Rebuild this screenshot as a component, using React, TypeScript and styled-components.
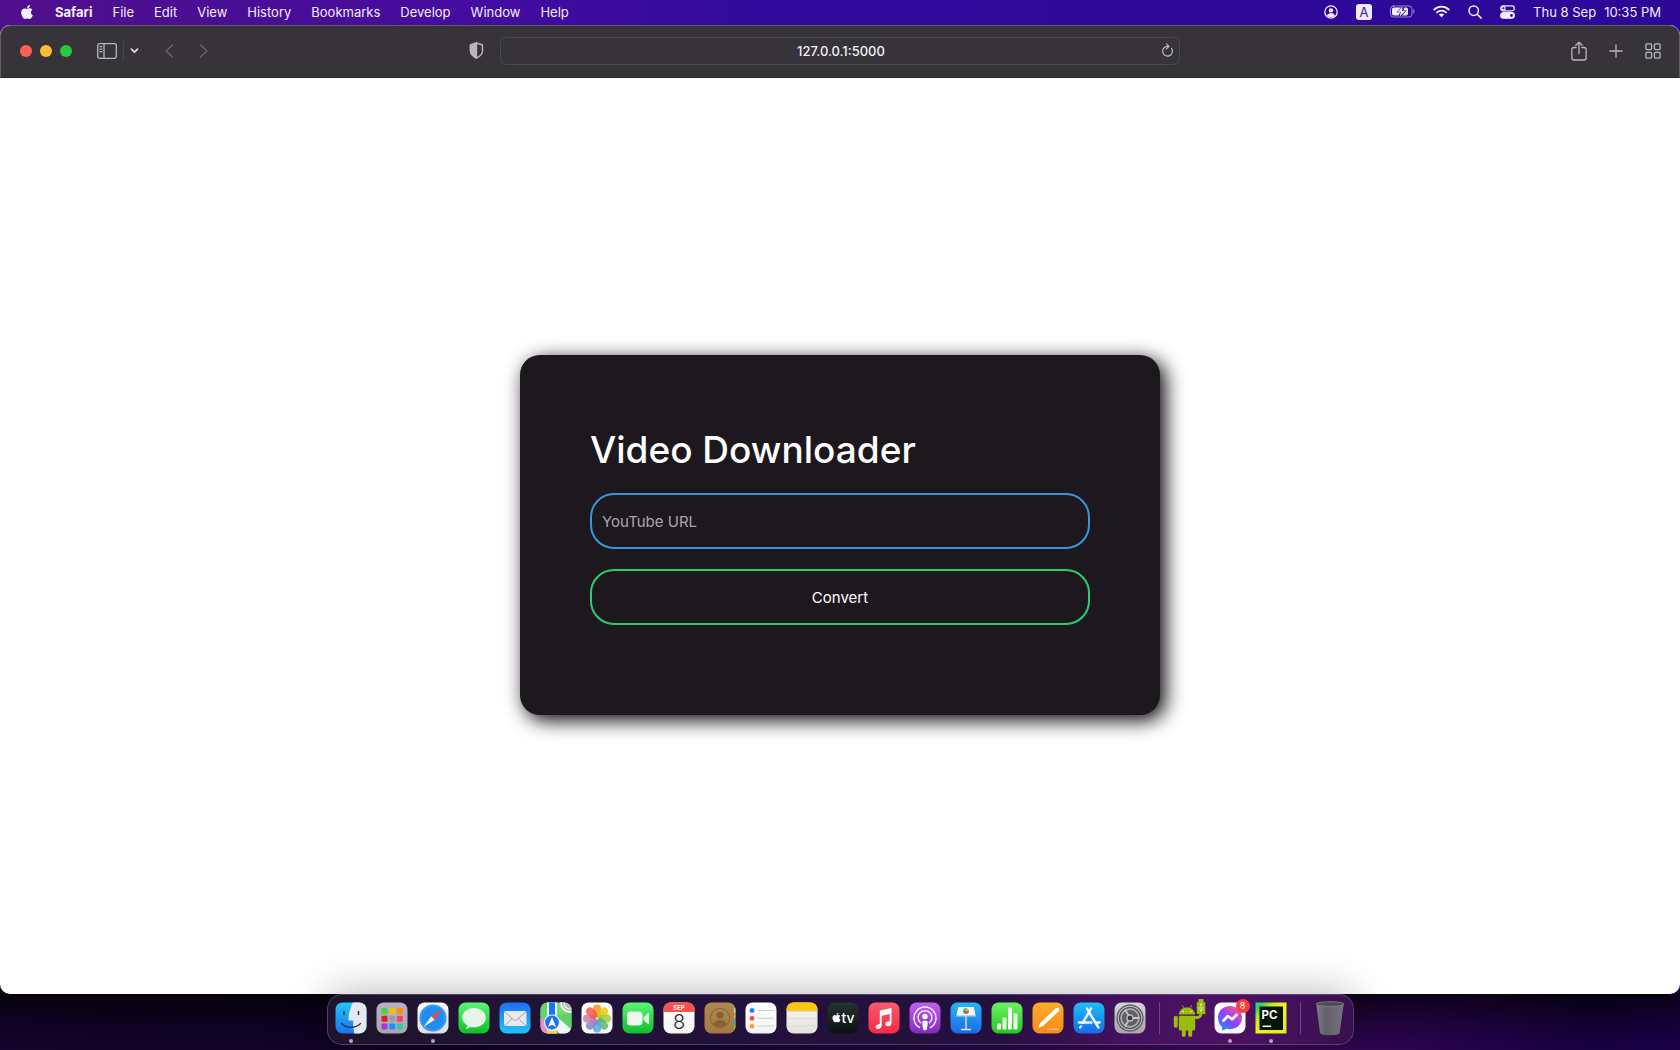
import React, { useState } from 'react';
import styled, { createGlobalStyle } from 'styled-components';
import { FaApple } from 'react-icons/fa';

const GlobalStyle = createGlobalStyle`
  *, *::before, *::after { box-sizing: border-box; }
  body { margin: 0; font-family: Inter, Roboto, "Liberation Sans", sans-serif; }
  button, input { font: inherit; color: inherit; }
`;

const Desktop = styled.div`
  display: flex;
  flex-direction: column;
  min-height: 100vh;
  background:
    linear-gradient(to right, #50108c 0%, #440ca0 28%, #300a9c 45%, #2c0798 100%) top / 100% 60px no-repeat,
    linear-gradient(to top, transparent 0%, rgba(0, 0, 0, 0.2) 40%, rgba(0, 0, 0, 0.7) 100%) bottom / 100% 57px no-repeat,
    linear-gradient(to right, #12042c 0%, #0e0324 28%, #1c063c 50%, #3c0a58 72%, #2a0450 84%, #190042 94%, #1a0046 100%);
`;

const MenuBar = styled.header`
  display: flex;
  justify-content: space-between;
  align-items: center;
  height: 25px;
  padding: 0 19px 2px 19px;
  color: #f3effa;
  font-size: 13px;
  line-height: 16px;
`;

const MenuGroup = styled.nav<{ $gap: number }>`
  display: flex;
  align-items: center;
  gap: ${(p) => p.$gap}px;
`;

const MenuButton = styled.button<{ $strong?: boolean }>`
  display: flex;
  align-items: center;
  padding: 0;
  border: 0;
  background: none;
  font-weight: ${(p) => (p.$strong ? 700 : 400)};
  white-space: nowrap;
`;

const BrowserWindow = styled.main`
  display: flex;
  flex: 1;
  flex-direction: column;
  overflow: hidden;
  border-radius: 10px;
  background: #fff;
`;

const Toolbar = styled.div`
  display: grid;
  grid-template-columns: 1fr minmax(0, 680px) 1fr;
  align-items: center;
  height: 53px;
  padding-bottom: 2px;
  border: 1px solid #5f5d61;
  border-bottom-color: #2b282c;
  border-radius: 10px 10px 0 0;
  background: #363438;
  color: #b9b7bb;
`;

const ToolSide = styled.div<{ $end?: boolean }>`
  display: flex;
  align-items: center;
  justify-content: ${(p) => (p.$end ? 'flex-end' : 'space-between')};
  gap: ${(p) => (p.$end ? 22 : 0)}px;
  padding: ${(p) => (p.$end ? '0 18px' : '0 16px 0 19px')};
`;

const ToolGroup = styled.div<{ $gap: number }>`
  display: flex;
  align-items: center;
  gap: ${(p) => p.$gap}px;
`;

const Light = styled.button<{ $color: string }>`
  width: 12px;
  height: 12px;
  padding: 0;
  border: 0;
  border-radius: 50%;
  background: ${(p) => p.$color};
`;

const ToolButton = styled.button<{ $dim?: boolean }>`
  display: flex;
  padding: 0;
  border: 0;
  background: none;
  color: ${(p) => (p.$dim ? '#67656a' : 'inherit')};
`;

const Divider = styled.span`
  width: 1px;
  height: 20px;
  background: #48464a;
`;

const Address = styled.form`
  display: flex;
  align-items: center;
  height: 28px;
  padding: 0 5px 0 20px;
  border: 1px solid #4b494e;
  border-radius: 7px;
`;

const AddressInput = styled.input`
  flex: 1;
  min-width: 0;
  padding: 0;
  border: 0;
  outline: 0;
  background: none;
  color: #f2f1f3;
  font-size: 13px;
  font-weight: 500;
  line-height: 16px;
  text-align: center;
`;

const Page = styled.section`
  display: flex;
  flex: 1;
  align-items: center;
  justify-content: center;
  padding: 20px 20px 22px;
`;

const Card = styled.form`
  display: flex;
  flex-direction: column;
  width: 100%;
  max-width: 640px;
  padding: 70px 70px 90px;
  border-radius: 20px;
  background: #1c181d;
  box-shadow: 5px 5px 20px 0 #000;
  color: #fff;
`;

const Title = styled.h1`
  margin: 0 0 18px;
  font-size: 37px;
  font-weight: 500;
  line-height: 50px;
`;

const Field = styled.input`
  height: 56px;
  padding: 0 10px;
  border: 2px solid #3498db;
  border-radius: 24px;
  outline: 0;
  background: transparent;
  font-size: 15px;
  &::placeholder { color: #a9a7aa; opacity: 1; }
`;

const Convert = styled.button`
  height: 56px;
  margin-top: 20px;
  border: 2px solid #2ecc71;
  border-radius: 24px;
  background: transparent;
  font-size: 15px;
`;

const DockArea = styled.footer`
  display: flex;
  justify-content: center;
  padding: 0 0 5px;
`;

const DockBar = styled.nav`
  position: relative;
  display: flex;
  gap: 9px;
  height: 51px;
  padding: 7px 7px 10px;
  border: 1px solid rgba(150, 130, 170, 0.4);
  border-radius: 15px;
  background: linear-gradient(to right, #1f142b 0%, #211238 25%, #24103f 65%, #451060 78%, #4c1264 88%, #38104f 100%);
  box-shadow: 0 0 40px rgba(0, 0, 0, 0.3);
`;

const DockItem = styled.button<{ $running?: boolean }>`
  position: relative;
  width: 32px;
  height: 32px;
  padding: 0;
  border: 0;
  background: none;
  svg { display: block; overflow: visible; }
  &::after {
    content: '';
    display: ${(p) => (p.$running ? 'block' : 'none')};
    width: 4px;
    height: 4px;
    margin: 5px auto 0;
    border-radius: 50%;
    background: #b9a0cc;
  }
`;

const DockRule = styled.span`
  width: 1px;
  margin: 0 4px;
  background: #6c4585;
`;

const Badge = styled.span`
  position: absolute;
  top: -3px;
  right: -4px;
  width: 14px;
  height: 14px;
  border-radius: 50%;
  background: #fc3d39;
  color: #fff;
  font-size: 9px;
  line-height: 14px;
  text-align: center;
`;

type Stops = [string, string];

function Tile({ id, colors, children }: { id: string; colors: Stops; children?: React.ReactNode }) {
  return (
    <svg width="32" height="32" viewBox="0 0 32 32" fill="none" aria-hidden="true">
      <defs>
        <linearGradient id={id} x1="0" y1="0" x2="0" y2="1">
          <stop stopColor={colors[0]} />
          <stop offset="1" stopColor={colors[1]} />
        </linearGradient>
        <clipPath id={`${id}-clip`}><rect x=".5" y=".5" width="31" height="31" rx="7.2" /></clipPath>
      </defs>
      <g clipPath={`url(#${id}-clip)`}>
        <rect width="32" height="32" fill={`url(#${id})`} />
        {children}
      </g>
    </svg>
  );
}

const Finder = () => (
  <Tile id="finder" colors={['#1fc8fb', '#1d70ef']}>
    <path d="M18 0c-3 6-4.400 12-4.600 18.500h4.800c-.2 5 .3 9.500 1.300 13.500H32V0z" fill="#e4e9f1" />
    <path d="M9 9.500v3M23.500 9.500v3" stroke="#1b3050" strokeWidth="1.500" strokeLinecap="round" />
    <path d="M6.500 21.500c5 5.200 14 5.200 19 0" stroke="#1b3050" strokeWidth="1.200" strokeLinecap="round" />
  </Tile>
);

const padColors = ['#43d54b', '#fdbb0a', '#fb8c0c', '#d81f26', '#9b9ca2', '#fb3f60', '#a03ad8', '#1c8ff8', '#37c8a0'];
const Launchpad = () => (
  <Tile id="launchpad" colors={['#b5b3c0', '#aaa7b5']}>
    {padColors.map((c, i) => (
      <rect key={c} x={5.500 + (i % 3) * 7.700} y={6 + Math.floor(i / 3) * 7.700} width="6" height="6" rx="1.300" fill={c} />
    ))}
  </Tile>
);

const Safari = () => (
  <Tile id="safari" colors={['#ffffff', '#dcdde0']}>
    <circle cx="16" cy="16" r="13.500" fill="#208df0" />
    <circle cx="16" cy="16" r="12.200" stroke="#8accf8" strokeWidth="1.200" strokeDasharray=".5 1.070" />
    <path d="M25.500 7 17.700 17.700 14.300 14.300z" fill="#f5453d" />
    <path d="M6.500 25 14.300 14.300 17.700 17.700z" fill="#f1f4f8" />
  </Tile>
);

const Messages = () => (
  <Tile id="messages" colors={['#5df777', '#0dbc29']}>
    <path d="M16 6c6.600 0 11.800 4.300 11.800 9.700S22.600 25.300 16 25.300c-1.200 0-2.400-.1-3.500-.4-1.200 1.100-3 1.800-5 1.900 1.100-1 1.700-2.100 1.700-3.500-3.100-1.800-5-4.500-5-7.600C4.200 10.300 9.400 6 16 6z" fill="#e6f5e7" />
  </Tile>
);

const Mail = () => (
  <Tile id="mail" colors={['#1e6df2', '#1cc6fb']}>
    <rect x="5" y="9" width="22.500" height="15" rx="1.800" fill="#e9e9ec" />
    <path d="m5.500 9.800 9.200 8c.9.800 2.200.800 3.100 0l9.200-8M5.800 23.500l7.400-7M26.700 23.500l-7.400-7" stroke="#8f949c" strokeWidth=".8" />
  </Tile>
);

const Maps = () => (
  <Tile id="maps" colors={['#7ee07c', '#52c95e']}>
    <path d="M0 0h9v20L0 14z" fill="#67d36c" />
    <path d="M0 15 18 32H0z" fill="#ef8cc7" />
    <path d="M7 20h10v12H7z" fill="#fbd348" />
    <path d="M16 14 32 28v4H20L10 20z" fill="#f5f5f5" />
    <path d="M16 13.500 32 27V11z" fill="#62d069" />
    <circle cx="30" cy="1" r="9" stroke="#f0f1f3" strokeWidth="2" fill="#b4b8c0" />
    <circle cx="30" cy="1" r="6" stroke="#f0f1f3" strokeWidth="1.200" />
    <path d="M7 0v18h10V0z" fill="#f4f5f7" />
    <path d="M9 0v18h6V0z" fill="#1874f2" />
    <circle cx="12" cy="20.500" r="7.500" fill="#1675f4" stroke="#e9f2fd" strokeWidth="1.200" />
    <path d="m12 15 4 10-4-2.300L8 25z" fill="#fff" />
  </Tile>
);

const petals = ['#f7941d', '#e8cc13', '#a6cc35', '#5eb974', '#58aae0', '#8a83cc', '#d07bae', '#f25c4a'];
const Photos = () => (
  <Tile id="photos" colors={['#ffffff', '#f6f6f6']}>
    {petals.map((c, i) => (
      <rect key={c} x="12" y="2.500" width="8" height="13" rx="4" fill={c} opacity=".86" transform={`rotate(${i * 45} 16 16.500)`} />
    ))}
  </Tile>
);

const FaceTime = () => (
  <Tile id="facetime" colors={['#5df777', '#0dbc29']}>
    <rect x="5" y="9.500" width="15.500" height="14" rx="3.500" fill="#eef8ef" />
    <path d="M21.500 15.500 26 11c.5-.5 1-.3 1 .4v10.200c0 .7-.5.900-1 .4l-4.500-4z" fill="#e0f5e3" />
  </Tile>
);

const Calendar = () => (
  <Tile id="calendar" colors={['#ffffff', '#f4f4f4']}>
    <rect width="32" height="10" fill="#f5524b" />
    <text x="16" y="8.200" textAnchor="middle" fill="#fff" fontSize="6" fontWeight="600">SEP</text>
    <text x="16" y="27" textAnchor="middle" fill="#29292b" fontSize="20" fontWeight="300">8</text>
  </Tile>
);

const Contacts = () => (
  <Tile id="contacts" colors={['#b18a50', '#a27a42']}>
    <path d="M31 6v5" stroke="#c4c8cc" strokeWidth="2" />
    <path d="M31 11.500v5" stroke="#e8a33b" strokeWidth="2" />
    <path d="M31 17v5" stroke="#36a5e3" strokeWidth="2" />
    <path d="M31 22.500v5" stroke="#60ca4b" strokeWidth="2" />
    <circle cx="16" cy="16" r="9.700" stroke="#846237" strokeWidth="1" />
    <circle cx="16" cy="13.200" r="3.500" fill="#846237" />
    <path d="M9.500 22c.8-3 3.300-4 6.500-4s5.700 1 6.500 4c-3.500 4-9.500 4-13 0z" fill="#846237" />
  </Tile>
);

const Reminders = () => (
  <Tile id="reminders" colors={['#ffffff', '#f3f3f3']}>
    {['#1d7cf6', '#f24e47', '#f5a02f'].map((c, i) => (
      <g key={c}>
        <circle cx="7" cy={8.500 + i * 7.800} r="2.200" fill={c} stroke={c} strokeOpacity=".25" strokeWidth="1.400" />
        <path d={`M12.500 ${8.500 + i * 7.800}h16`} stroke="#cbcbcd" strokeWidth=".9" />
      </g>
    ))}
  </Tile>
);

const Notes = () => (
  <Tile id="notes" colors={['#f9f9f7', '#e2e1dc']}>
    <rect width="32" height="8.700" fill="#fdc50b" />
    <path d="M0 9.200h32" stroke="#b7a774" strokeDasharray=".8 .8" />
    <path d="M0 16.500h32M0 24h32" stroke="#d5d4d1" strokeWidth=".7" />
  </Tile>
);

const Television = () => (
  <Tile id="television" colors={['#26342f', '#0c1012']}>
    <FaApple x="4" y="10" size={11} color="#fff" />
    <text x="14.500" y="21.300" fill="#fff" fontSize="14" fontWeight="500">tv</text>
  </Tile>
);

const Music = () => (
  <Tile id="music" colors={['#fb5c6f', '#fa2740']}>
    <path d="M11.800 8.500 23.500 6v14.800c0 2-1.500 3.400-3.500 3.400-1.500 0-2.600-.8-2.600-2.100 0-1.400 1-2.200 2.500-2.500l1.900-.4v-7.100l-8.100 1.700v9.800c0 2-1.500 3.500-3.600 3.500-1.500 0-2.500-.9-2.500-2.200 0-1.300.9-2.200 2.400-2.500l1.800-.4z" fill="#fff" />
  </Tile>
);

const Podcasts = () => (
  <Tile id="podcasts" colors={['#c65ff0', '#7d2cc0']}>
    <path d="M10.500 25.500a11 11 0 1 1 11 0M11.500 20.800a6.900 6.900 0 1 1 9 0" stroke="#f5e8fc" strokeWidth="1.500" strokeLinecap="round" />
    <circle cx="16" cy="14.500" r="2.700" fill="#fff" />
    <path d="M13.200 20.500c0-2.800 5.600-2.800 5.600 0l-.8 6c-.3 2.600-3.700 2.600-4 0z" fill="#fff" />
  </Tile>
);

const Keynote = () => (
  <Tile id="keynote" colors={['#24b9fa', '#1b67e6']}>
    <path d="M8.200 5h15.600l1.700 8H6.500z" fill="#f2f7fc" />
    <path d="M6.500 13h19v1.500h-19z" fill="#c4d5ea" />
    <path d="M16 14.500V27M11.500 27.500h9" stroke="#dce8f5" strokeWidth="1.400" strokeLinecap="round" />
    <path d="M16 9V6a3 3 0 0 1 3 3z" fill="#f5b52d" />
    <path d="M16 9h3a3 3 0 0 1-3 3z" fill="#ef4e45" />
    <path d="M16 9v3a3 3 0 0 1-3-3z" fill="#3c8fe5" />
    <path d="M16 9h-3a3 3 0 0 1 3-3z" fill="#4eca65" />
  </Tile>
);

const Numbers = () => (
  <Tile id="numbers" colors={['#6ef25d', '#20c91f']}>
    {[[6, 6], [11.500, 12], [17, 22], [22.500, 16]].map(([x, h]) => (
      <rect key={x} x={x} y={27.500 - h} width="4" height={h} rx=".8" fill="#effbed" />
    ))}
  </Tile>
);

const Pages = () => (
  <Tile id="pages" colors={['#fdae28', '#f78a17']}>
    <path d="m6 26 2.200-5L22.600 7.200c1.600-1.500 3.500-1.800 4.300-1 .8.800.3 2.500-1.200 4L11.200 23.700z" fill="#fff" />
    <path d="M15 27.200h12M9 21.500l2 2" stroke="#e4ded5" strokeWidth=".9" />
  </Tile>
);

const AppStore = () => (
  <Tile id="appstore" colors={['#1ec0fa', '#1769e8']}>
    <path d="M18 6.500 9.700 21M14 6.500l1.800 3.200M16.500 11l9 14.500M6 20.500h12.500M23 20.500h3.500M7.800 24.500l-.6 1" stroke="#f3f9ff" strokeWidth="2.400" strokeLinecap="round" />
  </Tile>
);

const Settings = () => (
  <Tile id="settings" colors={['#d3d5d8', '#a6a4a4']}>
    <circle cx="16" cy="16" r="13.500" fill="#3b3c3f" />
    <circle cx="16" cy="16" r="11.800" stroke="#b4b5b8" strokeWidth="1.400" fill="#4c4d50" />
    <circle cx="16" cy="16" r="13" stroke="#85868a" strokeWidth="1" strokeDasharray=".8 .8" />
    <circle cx="16" cy="16" r="9" stroke="#a9aaad" strokeWidth="1.800" fill="#606165" />
    <circle cx="16" cy="16" r="3" stroke="#b9babd" strokeWidth="1.300" fill="#37383b" />
    <path d="M19 16h6.500M14.500 13.400 11 7.500M14.500 18.600 11 24.500" stroke="#c6c7ca" strokeWidth="1.800" />
  </Tile>
);

const AndroidTransfer = () => (
  <svg width="32" height="32" viewBox="0 0 32 32" fill="#9abc0c" aria-hidden="true">
    <path d="M5.800 12.500C6.400 7.800 9.500 5.500 14 5.500s7.600 2.300 8.200 7z" />
    <path d="m9.500 3.500 2 3.500M18.500 3.500l-2 3.500" stroke="#9abc0c" strokeWidth=".8" strokeLinecap="round" />
    <path d="M5.800 13.700h16.400v13.100c0 1-.7 1.700-1.700 1.700h-1.300v4.200c0 2.900-4 2.900-4 0v-4.200h-2.400v4.200c0 2.900-4 2.900-4 0v-4.200H7.500c-1 0-1.700-.7-1.700-1.700z" />
    <rect x=".8" y="13.700" width="4" height="12" rx="2" />
    <path d="M22 15.500c4 .5 6.200-1.200 6-5" stroke="#9abc0c" strokeWidth="3" fill="none" />
    <path d="M25.500-3h5v3.200h1.800V12h-8.500V.2h1.700z" />
    <path d="M28 2v8M25.700 5v1.500L28 8.500l2.200-2V5M27 3.200l1-1.500 1 1.500" stroke="#eef5c6" strokeWidth=".8" fill="none" />
    <circle cx="10.200" cy="9.500" r=".8" fill="#fff" />
    <circle cx="17.800" cy="9.500" r=".8" fill="#fff" />
  </svg>
);

const Messenger = () => (
  <Tile id="messenger" colors={['#ffffff', '#f6f6f7']}>
    <defs>
      <linearGradient id="messenger-bubble" x1=".1" y1="1" x2=".9" y2="0">
        <stop stopColor="#0697ff" /><stop offset=".5" stopColor="#9a3cff" /><stop offset="1" stopColor="#ff5e78" />
      </linearGradient>
    </defs>
    <path d="M16 4c7 0 12 5 12 11.600s-5 11.600-12 11.600c-1.300 0-2.500-.2-3.600-.5L8.300 28.500 8 25c-2.600-2.300-4-5.600-4-9.400C4 9 9 4 16 4z" fill="url(#messenger-bubble)" />
    <path d="m9.500 18.700 4.300-4.700 4.400 3.200 4.300-4.200" stroke="#fff" strokeWidth="2.600" strokeLinecap="round" strokeLinejoin="round" />
  </Tile>
);

const PyCharm = () => (
  <svg width="32" height="32" viewBox="0 0 32 32" aria-hidden="true">
    <defs>
      <linearGradient id="pycharm" x1="0" y1="0" x2="1" y2="1">
        <stop stopColor="#21d7a9" /><stop offset=".12" stopColor="#2bd46a" /><stop offset=".3" stopColor="#c4ea20" /><stop offset=".5" stopColor="#f5f01c" /><stop offset="1" stopColor="#d8ec22" />
      </linearGradient>
    </defs>
    <rect x=".5" y=".5" width="31" height="31" fill="url(#pycharm)" />
    <rect x="4.500" y="4.500" width="23.500" height="23.500" fill="#071409" />
    <text x="6.500" y="16.500" fill="#fff" fontSize="11.500" fontWeight="700">PC</text>
    <path d="M7.500 24.300h8.500" stroke="#fff" strokeWidth="1.500" />
  </svg>
);

const Trash = () => (
  <svg width="32" height="34" viewBox="0 0 32 34" aria-hidden="true">
    <defs>
      <linearGradient id="trash" x1="0" y1="0" x2="1" y2="0">
        <stop stopColor="#7d7e86" /><stop offset=".35" stopColor="#5f6069" /><stop offset="1" stopColor="#73747d" />
      </linearGradient>
    </defs>
    <path d="M2.200 1.500 6 31c.4 3 19.200 3 19.600 0L29.800 1.500z" fill="url(#trash)" />
    <ellipse cx="16" cy="2" rx="13.800" ry="2.300" fill="#4d4854" stroke="#85858d" strokeWidth=".8" />
  </svg>
);

interface DockApp { name: string; Icon: React.FC; running?: boolean; badge?: string }

const apps: DockApp[] = [
  { name: 'Finder', Icon: Finder, running: true },
  { name: 'Launchpad', Icon: Launchpad },
  { name: 'Safari', Icon: Safari, running: true },
  { name: 'Messages', Icon: Messages },
  { name: 'Mail', Icon: Mail },
  { name: 'Maps', Icon: Maps },
  { name: 'Photos', Icon: Photos },
  { name: 'FaceTime', Icon: FaceTime },
  { name: 'Calendar', Icon: Calendar },
  { name: 'Contacts', Icon: Contacts },
  { name: 'Reminders', Icon: Reminders },
  { name: 'Notes', Icon: Notes },
  { name: 'TV', Icon: Television },
  { name: 'Music', Icon: Music },
  { name: 'Podcasts', Icon: Podcasts },
  { name: 'Keynote', Icon: Keynote },
  { name: 'Numbers', Icon: Numbers },
  { name: 'Pages', Icon: Pages },
  { name: 'App Store', Icon: AppStore },
  { name: 'System Preferences', Icon: Settings },
];

const recent: DockApp[] = [
  { name: 'Android File Transfer', Icon: AndroidTransfer },
  { name: 'Messenger', Icon: Messenger, running: true, badge: '8' },
  { name: 'PyCharm', Icon: PyCharm, running: true },
];

const DockButton = ({ app }: { app: DockApp }) => (
  <DockItem type="button" aria-label={app.name} $running={app.running}>
    <app.Icon />
    {app.badge && <Badge>{app.badge}</Badge>}
  </DockItem>
);

const Line = ({ w, h, width = 1, children }: { w: number; h: number; width?: number; children: React.ReactNode }) => (
  <svg width={w} height={h} viewBox={`0 0 ${w} ${h}`} fill="none" stroke="currentColor" strokeWidth={width} strokeLinecap="round" strokeLinejoin="round" aria-hidden="true">
    {children}
  </svg>
);

const UserIcon = () => (
  <Line w={14} h={14} width={1.300}>
    <circle cx="7" cy="7" r="6.200" />
    <circle cx="7" cy="5.400" r="2.200" fill="currentColor" stroke="none" />
    <path d="M3 10.800c.6-2 2.100-2.600 4-2.600s3.400.6 4 2.600c-2.200 2-5.800 2-8 0z" fill="currentColor" stroke="none" />
  </Line>
);

const InputSource = styled.span`
  width: 16px;
  height: 16px;
  border-radius: 3px;
  background: #efeaf8;
  color: #35208a;
  font-size: 13px;
  line-height: 16px;
  text-align: center;
`;

const BatteryIcon = () => (
  <Line w={25} h={13}>
    <rect x=".5" y="1" width="21.500" height="11" rx="3" opacity=".55" />
    <path d="M23.800 5v3" opacity=".6" />
    <path d="M4 2.500h7L6.500 7.300h3.700l-1.500 3.200H4c-1.200 0-2-.8-2-2v-4c0-1.200.8-2 2-2zM14.500 2.500h1.500c1.200 0 2 .8 2 2v4c0 1.200-.8 2-2 2h-4l4.700-5h-3.500z" fill="currentColor" stroke="none" />
    <path d="M12.700 1.500 7.500 6.800h3.300L9.700 11.500l5.600-5.600H12z" fill="currentColor" stroke="none" />
  </Line>
);

const WifiIcon = () => (
  <Line w={17} h={13} width={1.900}>
    <path d="M1.300 4.500c4-3.900 10.400-3.900 14.400 0M4 7.400c2.500-2.400 6.500-2.400 9 0" />
    <path d="M5.800 9.500c1.500-1.400 3.900-1.400 5.400 0L8.500 12.300z" fill="currentColor" stroke="none" />
  </Line>
);

const SearchIcon = () => <Line w={14} h={14} width={1.500}><circle cx="5.700" cy="5.700" r="4.700" /><path d="m9.300 9.300 3.800 3.800" /></Line>;

const ControlIcon = () => (
  <Line w={15} h={14} width={1.200}>
    <rect x=".7" y=".8" width="13.600" height="5" rx="2.500" />
    <circle cx="3.500" cy="3.300" r="1.600" />
    <rect x=".7" y="7.700" width="13.600" height="5.500" rx="2.700" fill="currentColor" />
    <circle cx="11.500" cy="10.500" r="1.400" fill="#3108a0" stroke="none" />
  </Line>
);

export default function App() {
  const [url, setUrl] = useState('');
  const [address, setAddress] = useState('127.0.0.1:5000');
  const stop = (e: React.FormEvent) => e.preventDefault();

  return (
    <Desktop>
      <GlobalStyle />
      <MenuBar>
        <MenuGroup $gap={20} aria-label="Application menu">
          <MenuButton type="button" aria-label="Apple"><FaApple size={16} /></MenuButton>
          <MenuButton type="button" $strong>Safari</MenuButton>
          {['File', 'Edit', 'View', 'History', 'Bookmarks', 'Develop', 'Window', 'Help'].map((m) => (
            <MenuButton type="button" key={m}>{m}</MenuButton>
          ))}
        </MenuGroup>
        <MenuGroup $gap={18} aria-label="Status menus">
          <MenuButton type="button" aria-label="User"><UserIcon /></MenuButton>
          <MenuButton type="button" aria-label="Input source"><InputSource>A</InputSource></MenuButton>
          <MenuButton type="button" aria-label="Battery"><BatteryIcon /></MenuButton>
          <MenuButton type="button" aria-label="Wi-Fi"><WifiIcon /></MenuButton>
          <MenuButton type="button" aria-label="Search"><SearchIcon /></MenuButton>
          <MenuButton type="button" aria-label="Control Centre"><ControlIcon /></MenuButton>
          <MenuGroup as="span" $gap={8}><span>Thu 8 Sep</span><span>10:35 PM</span></MenuGroup>
        </MenuGroup>
      </MenuBar>

      <BrowserWindow>
        <Toolbar>
          <ToolSide>
            <ToolGroup $gap={25}>
              <ToolGroup $gap={8}>
                <Light type="button" $color="#ff5f57" aria-label="Close" />
                <Light type="button" $color="#febc2e" aria-label="Minimise" />
                <Light type="button" $color="#28c840" aria-label="Zoom" />
              </ToolGroup>
              <ToolGroup $gap={6}>
                <ToolButton type="button" aria-label="Sidebar">
                  <Line w={20} h={16} width={1.300}>
                    <rect x=".7" y=".7" width="18.600" height="14.600" rx="2" />
                    <path d="M7 .7v14.600M3 3.700h1.800M3 6.200h1.800M3 8.700h1.800" />
                  </Line>
                </ToolButton>
                <Divider />
                <ToolButton type="button" aria-label="Tab groups">
                  <Line w={9} h={6} width={1.700}><path d="m1.500 1.200 3 3 3-3" stroke="#dddbe0" /></Line>
                </ToolButton>
              </ToolGroup>
              <ToolGroup $gap={25}>
                <ToolButton type="button" $dim aria-label="Back">
                  <Line w={10} h={14} width={1.400}><path d="M8.500 1 2 7l6.500 6" /></Line>
                </ToolButton>
                <ToolButton type="button" $dim aria-label="Forward">
                  <Line w={10} h={14} width={1.400}><path d="M1.500 1 8 7l-6.500 6" /></Line>
                </ToolButton>
              </ToolGroup>
            </ToolGroup>
            <ToolButton type="button" aria-label="Privacy report">
              <Line w={15} h={17} width={1.400}>
                <path d="M7.500 1 13.500 3v6c0 3.500-2.600 5.400-6 7-3.400-1.600-6-3.500-6-7V3z" />
                <path d="M7.500 1v15c-3.400-1.600-6-3.500-6-7V3z" fill="currentColor" />
              </Line>
            </ToolButton>
          </ToolSide>
          <Address onSubmit={stop}>
            <AddressInput aria-label="Address" value={address} onChange={(e) => setAddress(e.target.value)} />
            <ToolButton type="button" aria-label="Reload">
              <Line w={13} h={15} width={1.200}><path d="M10.500 5.300A4.900 4.900 0 1 1 6.500 3.300h1M5.500.8 8 3.300 5.500 5.800" /></Line>
            </ToolButton>
          </Address>
          <ToolSide $end>
            <ToolButton type="button" aria-label="Share">
              <Line w={16} h={20} width={1.300}><path d="M5 6.500H3C1.700 6.500.9 7.300.9 8.500V17c0 1.200.8 2 2.100 2h10c1.300 0 2.100-.8 2.100-2V8.500c0-1.200-.8-2-2.100-2h-2M8 12.500V1.200M4.800 4.200 8 1.200l3.200 3" /></Line>
            </ToolButton>
            <ToolButton type="button" aria-label="New tab">
              <Line w={14} h={14} width={1.300}><path d="M7 .8v12.400M.8 7h12.400" /></Line>
            </ToolButton>
            <ToolButton type="button" aria-label="Tab overview">
              <Line w={16} h={16} width={1.300}>
                <rect x=".9" y=".9" width="5.700" height="5.700" rx="1" /><rect x="9.400" y=".9" width="5.700" height="5.700" rx="1" />
                <rect x=".9" y="9.400" width="5.700" height="5.700" rx="1" /><rect x="9.400" y="9.400" width="5.700" height="5.700" rx="1" />
              </Line>
            </ToolButton>
          </ToolSide>
        </Toolbar>

        <Page>
          <Card onSubmit={stop}>
            <Title>Video Downloader</Title>
            <Field type="text" aria-label="YouTube URL" placeholder="YouTube URL" value={url} onChange={(e) => setUrl(e.target.value)} />
            <Convert type="submit">Convert</Convert>
          </Card>
        </Page>
      </BrowserWindow>

      <DockArea>
        <DockBar aria-label="Dock">
          {apps.map((app) => <DockButton key={app.name} app={app} />)}
          <DockRule />
          {recent.map((app) => <DockButton key={app.name} app={app} />)}
          <DockRule />
          <DockButton app={{ name: 'Bin', Icon: Trash }} />
        </DockBar>
      </DockArea>
    </Desktop>
  );
}
